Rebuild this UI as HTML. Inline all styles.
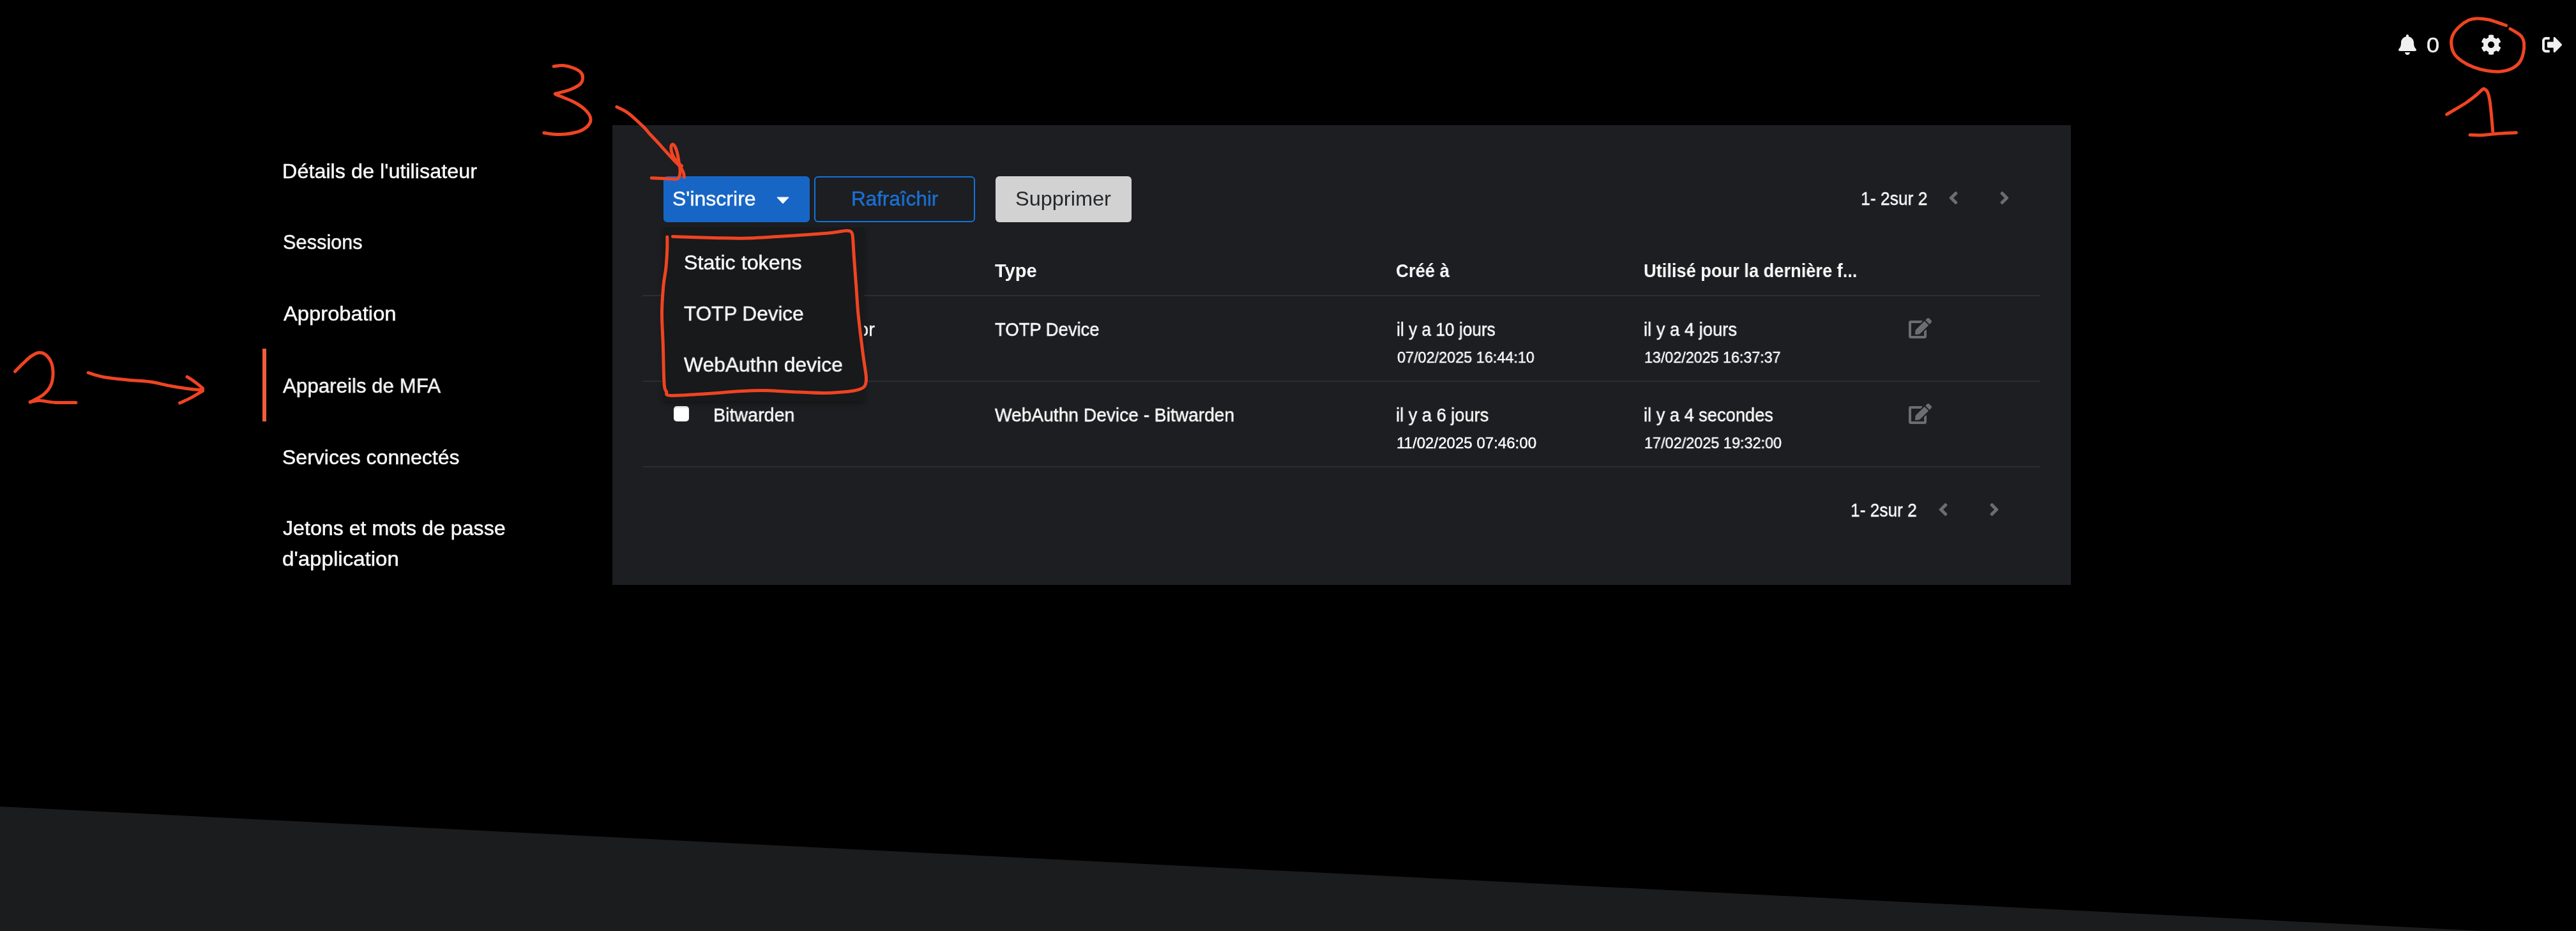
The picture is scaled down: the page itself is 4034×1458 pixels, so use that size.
<!DOCTYPE html>
<html><head><meta charset="utf-8">
<style>
html,body{margin:0;padding:0;width:4034px;height:1458px;overflow:hidden;background:#000;}
body{position:relative;font-family:"Liberation Sans",sans-serif;color:#fafafa;}
.t{position:absolute;white-space:nowrap;line-height:1;transform-origin:0 0;will-change:transform;-webkit-text-stroke:0.45px currentColor;}
.f32{font-size:32px;}
.f28{font-size:29px;}
.f24{font-size:24px;}
.b{font-weight:bold;-webkit-text-stroke:0;}
#bgpoly{position:absolute;left:0;top:0;}
#panel{position:absolute;left:959px;top:196px;width:2284px;height:720px;background:#1c1e21;}
.btn{position:absolute;box-sizing:border-box;border-radius:6px;}
#b1{left:1039px;top:276px;width:229px;height:72px;background:#1766c6;}
#b2{left:1275px;top:276px;width:252px;height:72px;border:2px solid #1672d9;}
#b3{left:1559px;top:276px;width:213px;height:72px;background:#d2d2d2;}
.sep{position:absolute;left:1007px;width:2188px;height:2px;background:#2b2e33;}
.chev{position:absolute;}
#dd{position:absolute;left:1039px;top:356px;width:314px;height:272px;background:#18191a;box-shadow:0 4px 8px rgba(0,0,0,0.35);}
.cb{position:absolute;width:24px;height:24px;background:#fff;border-radius:5px;box-shadow:inset 0 2px 3px rgba(0,0,0,0.12);}
#navbar{position:absolute;left:411px;top:546px;width:6px;height:114px;background:#f05e3c;}
svg{position:absolute;overflow:visible;}
</style></head>
<body>
<svg id="bgpoly" width="4034" height="1458" viewBox="0 0 4034 1458"><polygon points="0,1263 3890,1458 0,1458" fill="#1b1c1e"/></svg>

<!-- top header icons -->
<svg id="bell" style="left:3756px;top:54px" width="28" height="32" viewBox="0 0 448 512"><path fill="#f0f0f0" d="M224 512c35.32 0 63.97-28.65 63.97-64H160.03c0 35.35 28.65 64 63.97 64zm215.39-149.71c-19.32-20.76-55.47-51.99-55.47-154.29 0-77.7-54.48-139.9-127.94-155.16V32c0-17.67-14.32-32-32-32s-32 14.33-32 32v20.84C118.56 68.1 64.08 130.3 64.08 208c0 102.3-36.15 133.53-55.47 154.29-6 6.45-8.66 14.160-8.610 21.710.11 16.4 12.98 32 32.1 32h383.8c19.12 0 32-15.6 32.1-32 .05-7.55-2.61-15.27-8.61-21.71z"/></svg>
<div class="t" id="zero" style="left:3800px;top:53.4px;color:#f0f0f0;font-size:34px;transform:scaleX(1.06)">0</div>
<svg id="gear" style="left:3884.9px;top:53.7px" width="32.2" height="32.2" viewBox="0 0 512 512"><path fill="#f0f0f0" d="M487.4 315.7l-42.6-24.6c4.3-23.2 4.3-47 0-70.2l42.6-24.6c4.9-2.8 7.100-8.600 5.500-14-11.1-35.6-30-67.8-54.7-94.6-3.8-4.1-10-5.100-14.8-2.300L380.8 110c-17.9-15.4-38.5-27.3-60.8-35.1V25.8c0-5.600-3.900-10.5-9.400-11.7-36.7-8.200-74.3-7.800-109.2 0-5.500 1.200-9.400 6.100-9.400 11.700V75c-22.2 7.900-42.8 19.8-60.8 35.1L88.700 85.500c-4.900-2.800-11-1.900-14.8 2.300-24.7 26.7-43.6 58.9-54.7 94.6-1.700 5.400.6 11.2 5.500 14L67.300 221c-4.300 23.2-4.300 47 0 70.2l-42.6 24.600c-4.900 2.800-7.100 8.600-5.500 14 11.1 35.6 30 67.8 54.7 94.6 3.800 4.100 10 5.100 14.8 2.300l42.6-24.6c17.9 15.4 38.5 27.3 60.8 35.1v49.2c0 5.600 3.900 10.5 9.400 11.7 36.7 8.200 74.3 7.800 109.2 0 5.500-1.200 9.400-6.100 9.400-11.7v-49.2c22.2-7.900 42.8-19.8 60.8-35.1l42.6 24.6c4.900 2.800 11 1.900 14.8-2.300 24.7-26.7 43.6-58.9 54.7-94.6 1.500-5.500-.7-11.300-5.600-14.100zM256 336c-44.1 0-80-35.9-80-80s35.9-80 80-80 80 35.9 80 80-35.9 80-80 80z"/></svg>
<svg id="logout" style="left:3981px;top:58px" width="31.5" height="24.2" viewBox="0 64 512 384" preserveAspectRatio="none"><path fill="#f0f0f0" d="M497 273L329 441c-15 15-41 4.5-41-17v-96H152c-13.3 0-24-10.7-24-24v-96c0-13.3 10.7-24 24-24h136V88c0-21.4 25.9-32 41-17l168 168c9.3 9.4 9.3 24.6 0 34zM192 436v-40c0-6.6-5.4-12-12-12H96c-17.7 0-32-14.3-32-32V160c0-17.7 14.3-32 32-32h84c6.6 0 12-5.4 12-12V76c0-6.6-5.4-12-12-12H96c-53 0-96 43-96 96v192c0 53 43 96 96 96h84c6.6 0 12-5.4 12-12z"/></svg>

<!-- left nav -->
<div id="navbar"></div>
<div class="t f32" id="n1" style="left:441.8px;top:251.5px;transform:scaleX(1.0120)">Détails de l'utilisateur</div>
<div class="t f32" id="n2" style="left:443.0px;top:363px;transform:scaleX(0.9600)">Sessions</div>
<div class="t f32" id="n3" style="left:444.0px;top:475px;transform:scaleX(1.0230)">Approbation</div>
<div class="t f32" id="n4" style="left:443.0px;top:587.5px;transform:scaleX(0.9780)">Appareils de MFA</div>
<div class="t f32" id="n5" style="left:442.0px;top:699.5px;transform:scaleX(1.0000)">Services connectés</div>
<div class="t f32" id="n6" style="left:443.0px;top:811px;transform:scaleX(1.0050)">Jetons et mots de passe</div>
<div class="t f32" id="n7" style="left:442.0px;top:859px;transform:scaleX(1.0340)">d'application</div>

<!-- panel -->
<div id="panel"></div>
<div class="btn" id="b1"></div>
<div class="t f32" id="b1t" style="left:1053px;top:295px">S'inscrire</div>
<svg id="caret" style="left:1216px;top:307.5px" width="20" height="11.5" viewBox="0 0 20 11.5"><path fill="#fafafa" stroke="#fafafa" stroke-width="1.2" stroke-linejoin="round" d="M1.2 1.2 L18.8 1.2 L10 10.4 Z"/></svg>
<div class="btn" id="b2"></div>
<div class="t f32" id="b2t" style="left:1333.2px;top:295px;color:#1b73d8;transform:scaleX(0.9820)">Rafraîchir</div>
<div class="btn" id="b3"></div>
<div class="t f32" id="b3t" style="left:1589.8px;top:295px;color:#24272b;-webkit-text-stroke:0;transform:scaleX(1.0150)">Supprimer</div>

<div class="t f28" id="pg1" style="left:2914.0px;top:296.65px;transform:scaleX(0.9130)">1- 2sur 2</div>
<svg class="chev" id="pc1" style="left:3051.2px;top:294px" width="16" height="32" viewBox="0 0 256 512"><path fill="#6a6e73" d="M31.7 239l136-136c9.4-9.4 24.6-9.4 33.9 0l22.6 22.6c9.4 9.4 9.4 24.6 0 33.9L127.9 256l96.4 96.4c9.4 9.4 9.4 24.6 0 33.9L201.7 409c-9.4 9.4-24.6 9.4-33.9 0l-136-136c-9.5-9.4-9.5-24.6-.1-34z"/></svg>
<svg class="chev" id="pn1" style="left:3131px;top:294px" width="16" height="32" viewBox="0 0 256 512"><path fill="#6a6e73" d="M224.3 273l-136 136c-9.4 9.4-24.6 9.4-33.9 0l-22.6-22.6c-9.4-9.4-9.4-24.6 0-33.9l96.4-96.4-96.4-96.4c-9.4-9.4-9.4-24.6 0-33.9L54.3 103c9.4-9.4 24.6-9.4 33.9 0l136 136c9.5 9.4 9.5 24.6.1 34z"/></svg>

<!-- table header -->
<div class="t f28 b" id="h2" style="left:1557.6px;top:410.15px;transform:scaleX(0.9981)">Type</div>
<div class="t f28 b" id="h3" style="left:2186.2px;top:410.15px;transform:scaleX(0.9467)">Créé à</div>
<div class="t f28 b" id="h4" style="left:2574.4px;top:410.15px;transform:scaleX(0.9389)">Utilisé pour la dernière f...</div>
<div class="sep" style="top:462px"></div>
<!-- row 1 -->
<div class="t f28" id="r1n" style="left:1199px;top:502.15px">Authenticator</div>
<div class="t f28" id="r1t" style="left:1558.0px;top:502.15px;transform:scaleX(0.9456)">TOTP Device</div>
<div class="t f28" id="r1c" style="left:2187.0px;top:501.65px;transform:scaleX(0.9062)">il y a 10 jours</div>
<div class="t f24" id="r1cd" style="left:2188.0px;top:548px;transform:scaleX(0.9760)">07/02/2025 16:44:10</div>
<div class="t f28" id="r1u" style="left:2574.4px;top:501.65px;transform:scaleX(0.9438)">il y a 4 jours</div>
<div class="t f24" id="r1ud" style="left:2574.7px;top:548px;transform:scaleX(0.9700)">13/02/2025 16:37:37</div>
<svg id="e1" style="left:2989px;top:498px" width="36" height="32" viewBox="0 0 576 512"><path fill="#6a6e73" d="M402.6 83.2l90.2 90.2c3.8 3.8 3.8 10 0 13.8L274.4 405.6l-92.8 10.3c-12.4 1.4-22.9-9.1-21.5-21.5l10.3-92.8L388.8 83.2c3.8-3.8 10-3.8 13.8 0zm162-22.9l-48.8-48.8c-15.2-15.2-39.9-15.2-55.2 0l-35.4 35.4c-3.8 3.8-3.8 10 0 13.8l90.2 90.2c3.8 3.8 10 3.8 13.8 0l35.4-35.4c15.2-15.300 15.2-40 0-55.2zM384 346.2V448H64V128h229.8c3.2 0 6.2-1.3 8.5-3.5l40-40c7.6-7.6 2.2-20.5-8.5-20.5H48C21.5 64 0 85.5 0 112v352c0 26.5 21.5 48 48 48h352c26.5 0 48-21.5 48-48V306.2c0-10.7-12.9-16-20.5-8.5l-40 40c-2.2 2.3-3.5 5.3-3.5 8.5z"/></svg>
<div class="sep" style="top:596px"></div>
<!-- row 2 -->
<div class="cb" id="cb2" style="left:1055px;top:636px"></div>
<div class="t f28" id="r2n" style="left:1117.2px;top:635.65px;transform:scaleX(0.9880)">Bitwarden</div>
<div class="t f28" id="r2t" style="left:1557.6px;top:635.65px;transform:scaleX(0.9708)">WebAuthn Device - Bitwarden</div>
<div class="t f28" id="r2c" style="left:2186.2px;top:635.65px;transform:scaleX(0.9390)">il y a 6 jours</div>
<div class="t f24" id="r2cd" style="left:2186.6px;top:682px;transform:scaleX(1.0030)">11/02/2025 07:46:00</div>
<div class="t f28" id="r2u" style="left:2574.4px;top:635.65px;transform:scaleX(0.9389)">il y a 4 secondes</div>
<div class="t f24" id="r2ud" style="left:2574.7px;top:682px;transform:scaleX(0.9770)">17/02/2025 19:32:00</div>
<svg id="e2" style="left:2989px;top:631.5px" width="36" height="32" viewBox="0 0 576 512"><path fill="#6a6e73" d="M402.6 83.2l90.2 90.2c3.8 3.8 3.8 10 0 13.8L274.4 405.6l-92.8 10.3c-12.4 1.4-22.9-9.1-21.5-21.5l10.3-92.8L388.8 83.2c3.8-3.8 10-3.8 13.8 0zm162-22.9l-48.8-48.8c-15.2-15.2-39.9-15.2-55.2 0l-35.4 35.4c-3.8 3.8-3.8 10 0 13.8l90.2 90.2c3.8 3.8 10 3.8 13.8 0l35.4-35.4c15.2-15.300 15.2-40 0-55.2zM384 346.2V448H64V128h229.8c3.2 0 6.2-1.3 8.5-3.5l40-40c7.6-7.6 2.2-20.5-8.5-20.5H48C21.5 64 0 85.5 0 112v352c0 26.5 21.5 48 48 48h352c26.5 0 48-21.5 48-48V306.2c0-10.7-12.9-16-20.5-8.5l-40 40c-2.2 2.3-3.5 5.3-3.5 8.5z"/></svg>
<div class="sep" style="top:730px"></div>

<div class="t f28" id="pg2" style="left:2898.2px;top:784.65px;transform:scaleX(0.9072)">1- 2sur 2</div>
<svg class="chev" id="pc2" style="left:3035.1px;top:782px" width="16" height="32" viewBox="0 0 256 512"><path fill="#6a6e73" d="M31.7 239l136-136c9.4-9.4 24.6-9.4 33.9 0l22.6 22.6c9.4 9.4 9.4 24.6 0 33.9L127.9 256l96.4 96.4c9.4 9.4 9.4 24.6 0 33.9L201.7 409c-9.4 9.4-24.6 9.4-33.9 0l-136-136c-9.5-9.4-9.5-24.6-.1-34z"/></svg>
<svg class="chev" id="pn2" style="left:3115px;top:782px" width="16" height="32" viewBox="0 0 256 512"><path fill="#6a6e73" d="M224.3 273l-136 136c-9.4 9.4-24.6 9.4-33.9 0l-22.6-22.6c-9.4-9.4-9.4-24.6 0-33.9l96.4-96.4-96.4-96.4c-9.4-9.4-9.4-24.6 0-33.9L54.3 103c9.4-9.4 24.6-9.4 33.9 0l136 136c9.5 9.4 9.5 24.6.1 34z"/></svg>

<!-- dropdown -->
<div id="dd"></div>
<div class="t f32" id="d1" style="left:1070.5px;top:395px;transform:scaleX(1.0085)">Static tokens</div>
<div class="t f32" id="d2" style="left:1071.0px;top:474.5px;transform:scaleX(0.9830)">TOTP Device</div>
<div class="t f32" id="d3" style="left:1071.0px;top:554.5px;transform:scaleX(0.9940)">WebAuthn device</div>

<!-- annotations -->
<svg id="ann" style="left:0;top:0" width="4034" height="1458" viewBox="0 0 4034 1458">
<g fill="none" stroke="#ef4423" stroke-width="5" stroke-linecap="round" stroke-linejoin="round">
<path d="M3831.7,179.1 C3834.0,177.7 3840.3,174.1 3845.5,170.9 C3850.7,167.8 3857.6,163.8 3862.9,160.2 C3868.2,156.6 3873.0,152.8 3877.1,149.5 C3881.2,146.2 3885.1,142.0 3887.3,140.3 C3889.5,138.6 3889.1,138.8 3890.4,139.3 C3891.7,139.8 3893.6,140.7 3895.0,143.4 C3896.4,146.1 3897.6,150.2 3898.6,155.6 C3899.6,161.0 3900.2,167.7 3901.1,176.0 C3901.9,184.3 3903.3,200.7 3903.7,205.6"/>
<path d="M3868.0,211.2 C3870.6,211.3 3876.0,212.0 3883.3,211.7 C3890.6,211.4 3902.3,209.9 3911.8,209.2 C3921.3,208.5 3935.6,207.9 3940.4,207.7"/>
<path d="M3924.5,39.9 C3922.2,39.1 3915.2,36.5 3910.6,35.0 C3905.9,33.5 3902.0,31.7 3896.6,30.7 C3891.2,29.7 3883.5,28.9 3878.3,29.1 C3873.1,29.3 3870.0,29.7 3865.5,31.8 C3861.0,33.9 3855.4,37.9 3851.5,41.5 C3847.6,45.1 3844.0,49.0 3841.8,53.3 C3839.7,57.6 3838.4,62.3 3838.6,67.3 C3838.8,72.3 3840.2,78.8 3842.9,83.4 C3845.6,88.1 3849.7,91.6 3854.7,95.2 C3859.7,98.8 3866.4,102.3 3873.0,104.9 C3879.6,107.5 3887.3,109.6 3894.5,110.8 C3901.7,112.0 3909.7,112.4 3916.0,111.9 C3922.3,111.5 3927.3,110.3 3932.1,108.1 C3936.9,105.8 3941.8,102.5 3945.0,98.4 C3948.2,94.3 3950.2,88.8 3951.4,83.4 C3952.7,78.0 3953.0,70.7 3952.5,66.2 C3952.0,61.7 3950.3,59.2 3948.2,56.5 C3946.0,53.8 3942.5,52.0 3939.6,50.1 C3936.7,48.2 3932.4,46.0 3931.0,45.2"/>
<path d="M23.5,581.8 C25.5,579.8 31.5,573.5 35.6,569.6 C39.8,565.7 44.1,561.0 48.4,558.1 C52.7,555.2 57.4,552.7 61.2,552.3 C65.0,551.9 68.3,552.8 71.5,555.5 C74.7,558.2 78.6,563.2 80.5,568.3 C82.4,573.4 83.2,580.2 83.0,586.2 C82.8,592.2 81.8,598.9 79.2,604.2 C76.6,609.6 72.9,614.0 67.6,618.3 C62.3,622.6 50.6,627.9 47.2,629.8"/>
<path d="M47.2,629.8 C49.5,629.4 54.6,627.1 61.2,627.2 C67.8,627.3 77.3,629.9 86.9,630.4 C96.5,630.9 113.6,630.4 118.9,630.4"/>
<path d="M138.1,583.7 C142.4,584.9 153.0,588.8 163.7,590.7 C174.4,592.6 190.4,594.0 202.2,595.2 C213.9,596.4 223.5,596.3 234.2,597.8 C244.9,599.3 255.5,602.3 266.2,604.2 C276.9,606.1 289.6,608.2 298.2,609.3 C306.8,610.4 314.3,610.4 317.5,610.6"/>
<path d="M293.1,590.1 C295.0,591.4 300.6,594.8 304.7,597.8 C308.8,600.8 315.4,606.3 317.5,608.0"/>
<path d="M317.5,612.0 C314.3,613.9 304.2,620.2 298.2,623.4 C292.2,626.6 284.4,629.8 281.6,631.1"/>
<path d="M867.2,104.0 C869.7,103.8 876.6,102.1 881.9,102.6 C887.1,103.1 894.1,104.9 898.7,106.8 C903.4,108.7 907.5,111.2 909.8,113.7 C912.1,116.2 912.8,119.1 912.6,122.1 C912.4,125.1 911.6,128.9 908.4,131.9 C905.1,134.9 898.5,138.1 893.1,140.3 C887.8,142.5 880.3,144.0 876.3,145.2 C872.3,146.4 869.1,146.4 869.3,147.3 C869.5,148.2 872.8,148.7 877.7,150.8 C882.6,152.9 892.4,156.4 898.7,159.8 C905.0,163.2 911.1,167.0 915.4,171.0 C919.7,175.0 923.3,179.6 924.5,183.6 C925.7,187.6 924.9,191.3 922.4,194.8 C919.9,198.3 915.8,202.1 909.8,204.6 C903.8,207.1 893.5,209.2 886.1,210.1 C878.7,211.0 870.8,210.4 865.1,210.1 C859.4,209.8 854.1,208.3 851.9,208.0"/>
<path d="M965.9,167.4 C968.9,169.0 976.7,171.8 983.6,176.9 C990.5,182.0 1001.5,192.6 1007.2,198.1 C1012.9,203.6 1013.7,205.6 1017.7,210.0 C1021.8,214.4 1026.8,219.4 1031.5,224.6 C1036.2,229.8 1041.9,236.3 1046.1,240.9 C1050.2,245.5 1053.2,248.8 1056.4,252.1 C1059.6,255.4 1062.7,257.7 1065.0,260.7 C1067.3,263.7 1069.1,267.4 1070.2,270.2 C1071.3,273.0 1071.2,276.3 1071.4,277.5"/>
<path d="M1020.3,278.7 C1023.6,278.9 1033.8,279.3 1040.1,279.6 C1046.4,279.9 1054.4,280.6 1058.1,280.5 C1061.8,280.4 1061.3,279.8 1062.4,278.7 C1063.5,277.6 1064.2,275.9 1064.6,273.6 C1065.0,271.3 1065.2,268.1 1065.0,265.0 C1064.8,261.9 1063.9,258.1 1063.3,254.7 C1062.7,251.3 1062.3,247.8 1061.6,244.4 C1060.9,241.0 1060.0,237.0 1059.0,234.1 C1058.0,231.2 1056.7,228.4 1055.5,227.2 C1054.3,226.0 1052.9,226.1 1052.1,226.8 C1051.3,227.5 1050.8,229.4 1050.8,231.5 C1050.8,233.6 1051.3,236.6 1052.1,239.2 C1052.9,241.8 1053.9,244.4 1055.5,247.0 C1057.1,249.6 1059.6,252.6 1061.6,254.7 C1063.6,256.8 1066.6,258.9 1067.6,259.8"/>
<path d="M1053.4,370.5 C1064.1,370.8 1097.9,372.0 1117.4,372.4 C1136.9,372.8 1148.2,373.8 1170.2,373.1 C1192.2,372.5 1227.4,369.9 1249.4,368.5 C1271.4,367.1 1289.4,365.7 1302.2,364.5 C1315.0,363.3 1320.7,361.2 1326.0,361.2 C1331.3,361.2 1332.3,362.0 1333.9,364.5 C1335.5,367.0 1335.2,370.5 1335.8,376.4 C1336.3,382.3 1336.4,388.2 1337.2,400.0 C1338.0,411.8 1339.5,431.6 1340.7,447.3 C1341.9,463.1 1342.4,476.8 1344.2,494.5 C1346.0,512.2 1349.3,538.0 1351.3,553.6 C1353.3,569.2 1355.4,580.4 1356.2,588.0 C1357.0,595.6 1356.4,596.2 1356.0,599.0 C1355.6,601.8 1355.1,603.3 1353.8,605.0 C1352.5,606.7 1350.8,607.8 1348.0,609.0 C1345.2,610.2 1342.4,611.1 1337.0,612.0 C1331.6,612.9 1323.4,613.7 1315.4,614.3 C1307.4,614.9 1302.2,615.5 1289.0,615.4 C1275.8,615.3 1251.6,614.1 1236.2,613.5 C1220.8,612.9 1209.8,611.6 1196.6,611.5 C1183.4,611.4 1172.4,611.9 1157.0,612.8 C1141.6,613.7 1122.0,615.7 1104.2,616.8 C1086.4,617.9 1060.2,620.0 1050.1,619.4 C1040.0,618.8 1045.2,616.1 1043.5,613.0 C1041.8,609.9 1040.9,612.8 1040.1,600.9 C1039.2,589.0 1039.0,560.3 1038.4,541.8 C1037.8,523.3 1036.4,505.6 1036.5,489.8 C1036.6,474.1 1037.9,458.9 1038.9,447.3 C1040.0,435.7 1041.8,429.6 1042.8,420.0 C1043.8,410.4 1044.5,397.8 1044.8,389.6 C1045.1,381.5 1044.8,374.2 1044.8,371.1"/>
</g>
</svg>
</body></html>
